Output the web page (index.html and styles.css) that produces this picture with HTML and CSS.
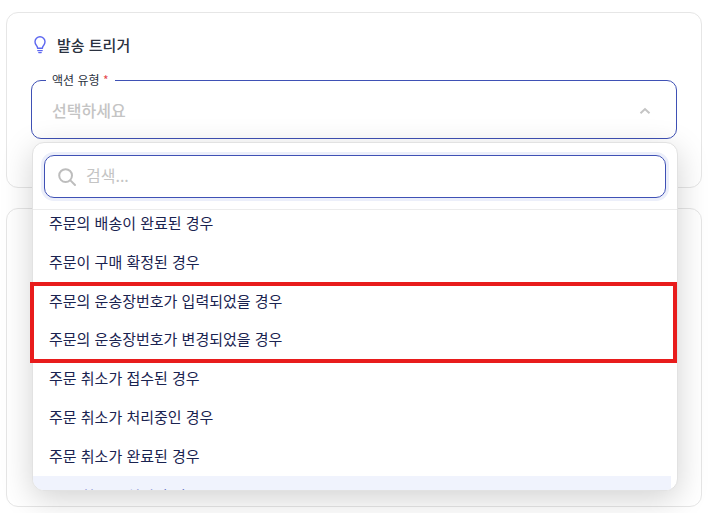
FILE: index.html
```html
<!DOCTYPE html>
<html lang="ko">
<head>
<meta charset="utf-8">
<title>발송 트리거</title>
<link rel="stylesheet" href="styles.css">
</head>
<body>
<div class="page">
  <section class="card card-top">
    <h2 class="card-title">
      <svg class="bulb" width="16" height="18" viewBox="-1 0 16 18" fill="none" stroke="#5c66f0" stroke-width="1.4" stroke-linecap="round" stroke-linejoin="round"><path d="M5.6 12.2c0-1.5-.6-2.2-1.3-3A5 5 0 0 1 3 5.8a5 5 0 0 1 10 0c0 1.3-.5 2.4-1.3 3.4-.7.8-1.3 1.5-1.3 3z"/><path d="M5.8 14.6h4.4"/><path d="M6.8 16.6h2.4"/></svg>
      <span>발송 트리거</span>
    </h2>
    <div class="select-field">
      <div class="legend">액션 유형 <em>*</em></div>
      <span class="placeholder">선택하세요</span>
      <svg class="chevron" width="12" height="8" viewBox="0 0 12 8" fill="none" stroke="#c4c4c4" stroke-width="2"><path d="M1.5 6.2 6 2l4.5 4.2"/></svg>
    </div>
  </section>
  <section class="card card-bottom"></section>
  <div class="dropdown">
    <div class="search-wrap">
      <div class="search">
        <svg width="20" height="20" viewBox="0 0 20 20" fill="none" stroke="#bdbdbd" stroke-width="2" stroke-linecap="round"><circle cx="8.6" cy="8.6" r="6.4"/><path d="m13.4 13.4 4.6 4.6"/></svg>
        <span>검색...</span>
      </div>
    </div>
    <div class="options-scroll">
      <ul class="options">
        <li>주문의 배송이 완료된 경우</li>
        <li>주문이 구매 확정된 경우</li>
        <li>주문의 운송장번호가 입력되었을 경우</li>
        <li>주문의 운송장번호가 변경되었을 경우</li>
        <li>주문 취소가 접수된 경우</li>
        <li>주문 취소가 처리중인 경우</li>
        <li>주문 취소가 완료된 경우</li>
        <li class="active">주문 취소로 처리된 경우</li>
      </ul>
    </div>
  </div>
  <div class="highlight"></div>
</div>
</body>
</html>
```
FILE: styles.css
```css
* { box-sizing: border-box; }
html, body { margin: 0; height: 100%; }
body {
  background: #fff;
  font-family: "Noto Sans CJK KR", "Noto Sans", sans-serif;
  overflow: hidden;
}
.page {
  position: relative;
  width: 708px;
  height: 513px;
  padding: 12px 6px 0 6px;
  display: flex;
  flex-direction: column;
  gap: 20px;
  overflow: hidden;
}
.card {
  background: #fff;
  border: 1px solid #e6e6e6;
  border-radius: 12px;
  flex: none;
}
.card-top {
  height: 176px;
  padding: 22px 24px 0 24px;
}
.card-bottom { height: 299px; }
.card-title {
  margin: 0;
  display: flex;
  align-items: center;
  gap: 10px;
  font-size: 15px;
  font-weight: 500;
  line-height: 20px;
  color: #2b3240;
}
.select-field {
  position: relative;
  margin-top: 25px;
  height: 59px;
  border: 1px solid #3f51b5;
  border-radius: 10px;
  display: flex;
  align-items: center;
  justify-content: space-between;
  padding: 1px 25px 0 20px;
}
.chevron { margin-top: 2px; }
.legend {
  position: absolute;
  left: 14px;
  top: -9px;
  padding: 0 6px;
  background: #fff;
  font-size: 12px;
  line-height: 16px;
  color: #2b3240;
}
.legend em { color: #e5484d; font-style: normal; }
.placeholder { font-size: 16px; font-weight: 500; color: #c4c4c4; line-height: 22px; }
.dropdown {
  position: absolute;
  left: 32px;
  top: 142px;
  width: 646px;
  height: 349px;
  background: #fff;
  border: 1px solid #e2e2e2;
  border-radius: 12px;
  box-shadow: 0 8px 32px rgba(0,0,0,.18);
  overflow: hidden;
}
.search-wrap {
  padding: 12px 11px 11px;
  border-bottom: 1px solid #ececec;
}
.search {
  height: 43px;
  border: 1px solid #3f51b5;
  border-radius: 10px;
  box-shadow: 0 0 0 3px #eceffa;
  display: flex;
  align-items: center;
  gap: 9px;
  padding: 0 12px;
  font-size: 16px;
  line-height: 22px;
  color: #c4c4c4;
}
.search span { margin-top: -4px; }
.options-scroll {
  height: 281px;
  overflow: hidden;
}
.options {
  list-style: none;
  margin: -6.9px 0 0;
  padding: 0 6px 0 0;
}
.options li {
  height: 38.8px;
  padding-left: 16px;
  display: flex;
  align-items: center;
  font-size: 15px;
  color: #1a2350;
}
.options li.active {
  margin-top: 1.5px;
  background: #f0f3fd;
  color: #3f51b5;
}
.highlight {
  position: absolute;
  left: 30px;
  top: 282px;
  width: 647px;
  height: 81px;
  border: 4px solid #e81c1c;
}
```
